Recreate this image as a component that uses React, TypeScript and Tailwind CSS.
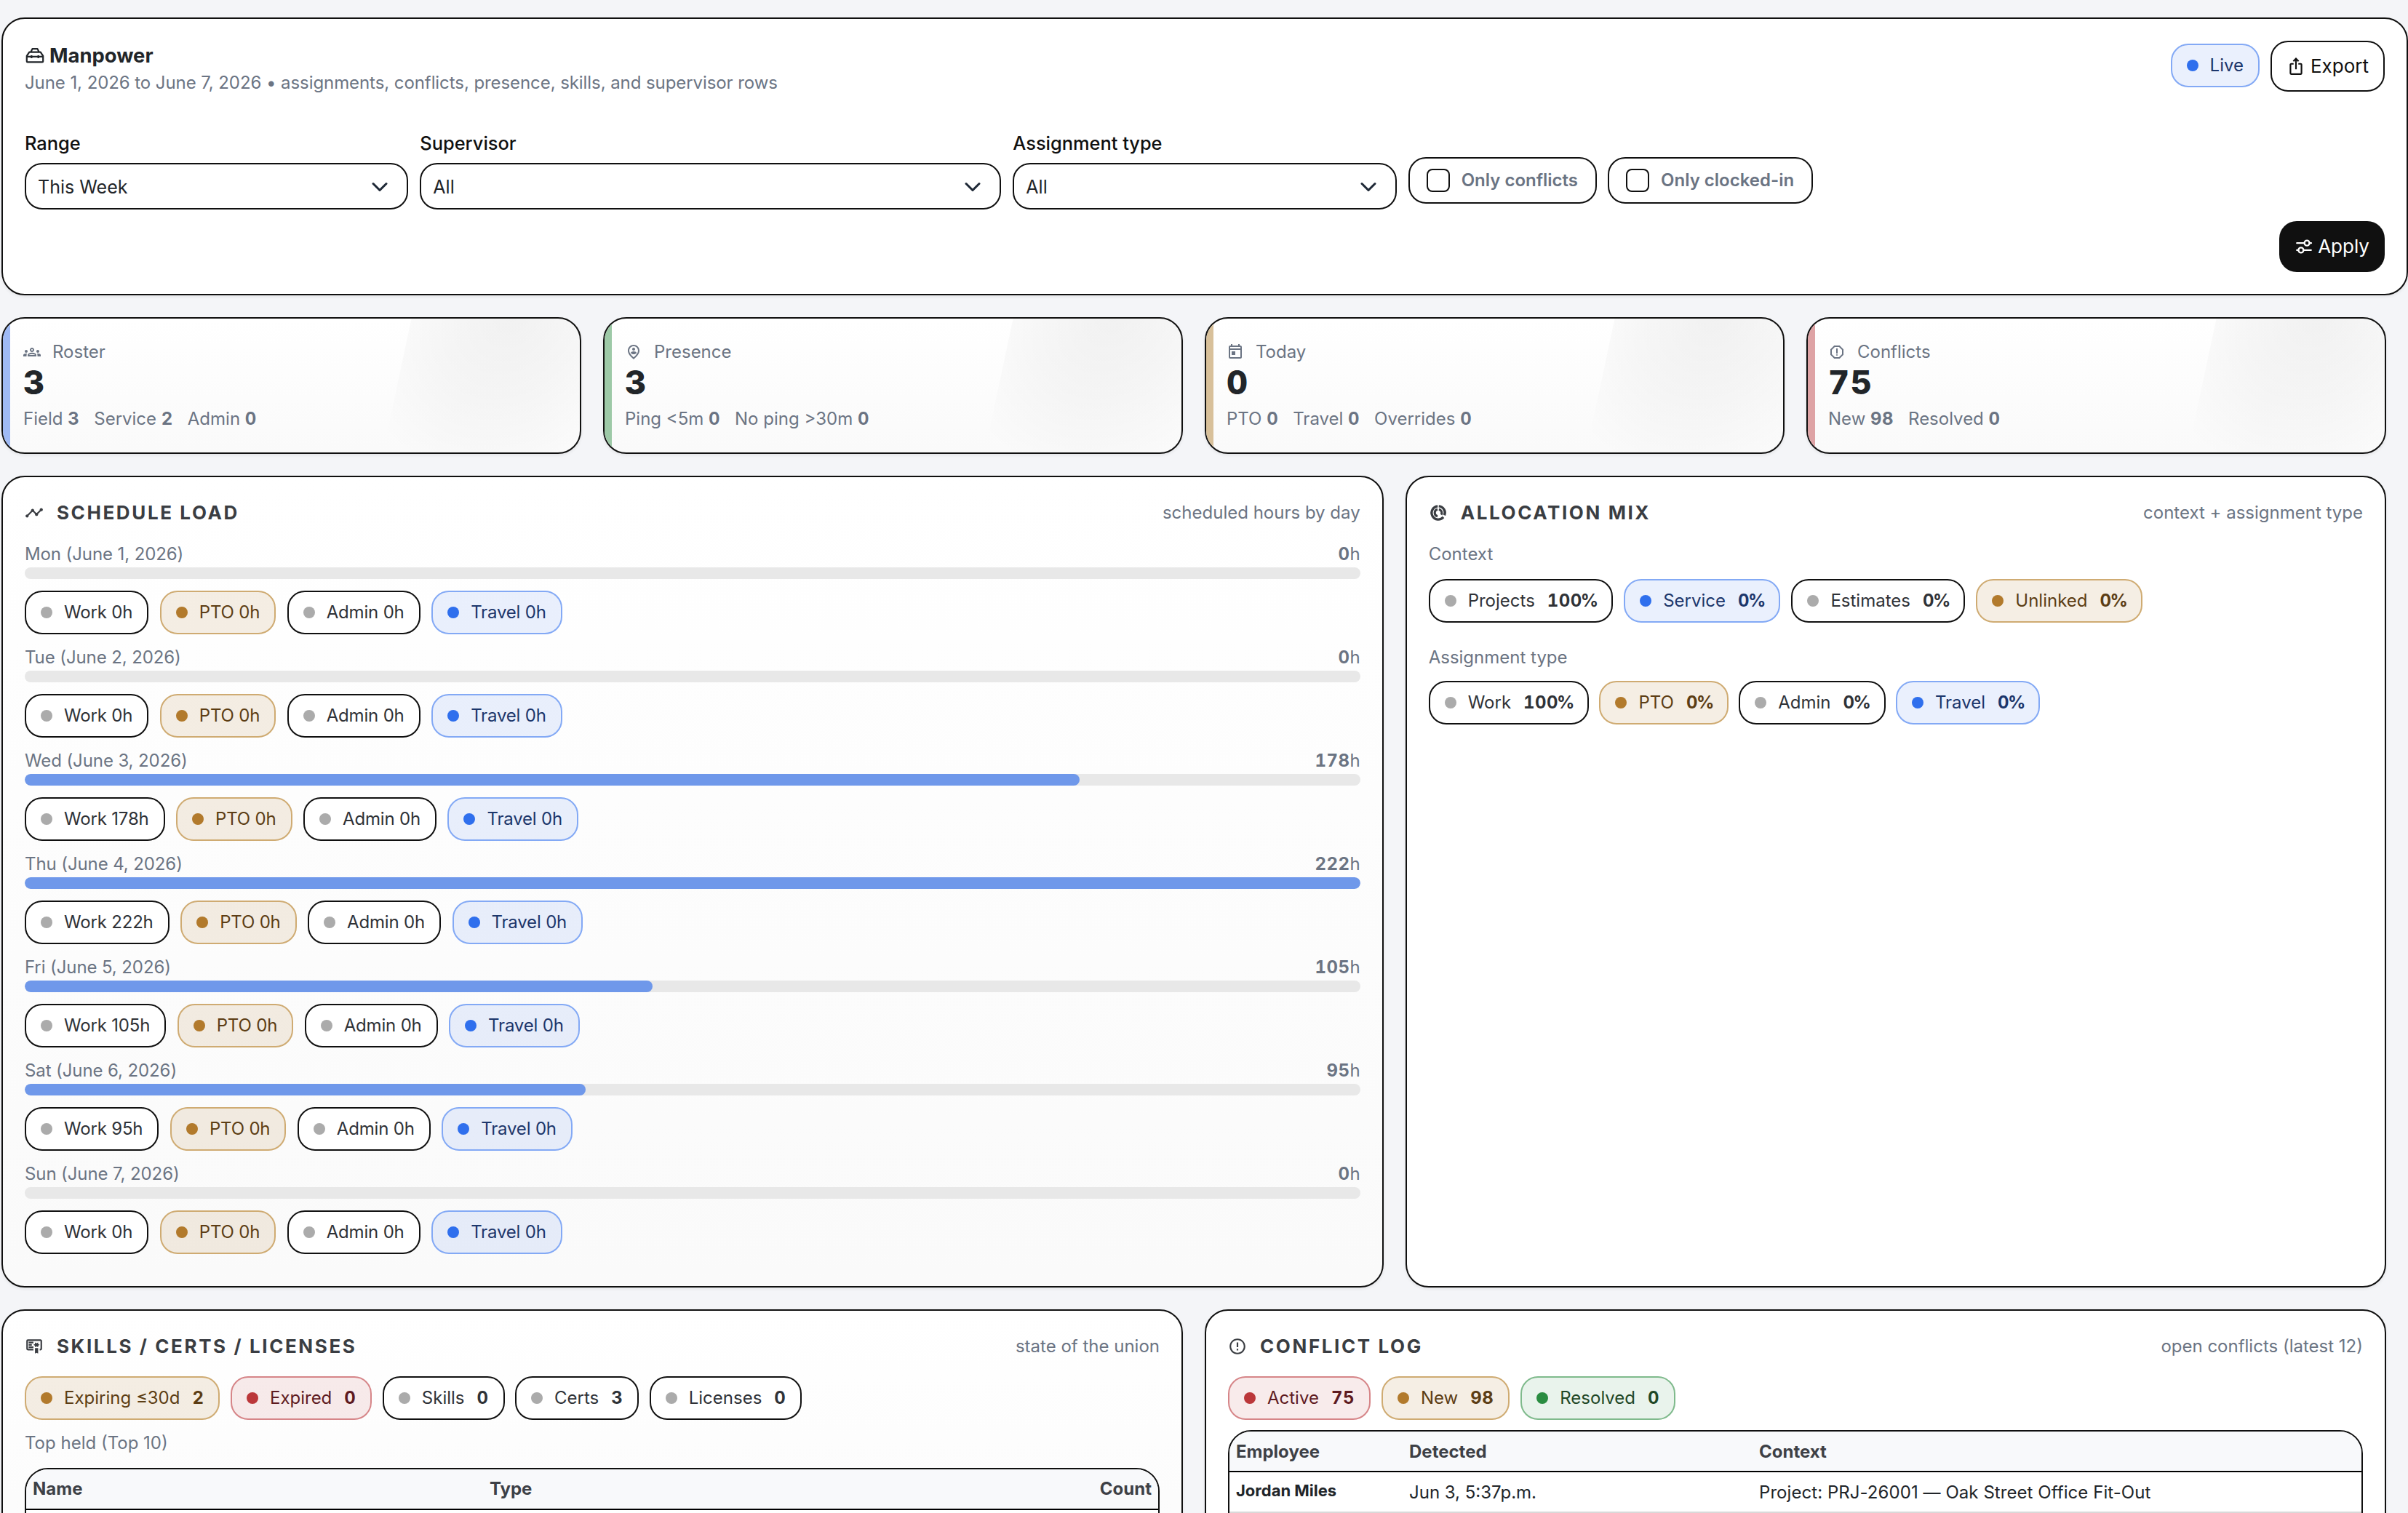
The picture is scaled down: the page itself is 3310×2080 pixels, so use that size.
import type { ReactNode } from "react";
import {
  MdErrorOutline,
  MdIosShare,
  MdOutlineGroups,
  MdOutlinePersonPinCircle,
  MdOutlineReport,
  MdOutlineToday,
  MdTimeline,
} from "react-icons/md";

type Tone = "plain" | "amber" | "blue" | "red" | "green";

const toneBox: Record<Tone, string> = {
  plain: "border-[#101010] bg-white text-[#2f3237]",
  amber: "border-[#cfab72] bg-[#b27a2c]/13 text-[#5c3d14]",
  blue: "border-[#83a9f5] bg-[#2f6fed]/10 text-[#1c366b]",
  red: "border-[#d68588] bg-[#bb373a]/10 text-[#5e1a1f]",
  green: "border-[#7fba8c] bg-[#2a8c41]/10 text-[#1f4726]",
};

const toneDot: Record<Tone, string> = {
  plain: "bg-[#ababab]",
  amber: "bg-[#b27a2c]",
  blue: "bg-[#2f6fed]",
  red: "bg-[#bb373a]",
  green: "bg-[#2a8c41]",
};

function Pill({ tone, label, value, percent }: { tone: Tone; label: string; value?: string; percent?: boolean }) {
  return (
    <span
      className={`flex h-[60px] shrink-0 items-center gap-4 rounded-[24px] border-2 px-5 whitespace-nowrap ${toneBox[tone]}`}
    >
      <span className={`size-4 rounded-full ${toneDot[tone]}`} />
      <span>{label}</span>
      {value !== undefined && (
        <b className="ml-px font-bold tracking-[0.02em] tabular-nums">
          {value}
          {percent && <span className="-ml-[2px] tracking-[-2px]">%</span>}
        </b>
      )}
    </span>
  );
}

function ToolboxIcon() {
  return (
    <svg viewBox="0 0 24 24" className="size-7" fill="none" stroke="currentColor" strokeWidth="1.9" strokeLinejoin="round">
      <path d="M7.2 8.2 9 4.4h6l1.8 3.8M5.4 8.2h13.2l3 4.6V19a1 1 0 0 1-1 1H3.4a1 1 0 0 1-1-1v-6.2zM2.4 13.6h19.2M8 12v3.4M16 12v3.4" />
    </svg>
  );
}

function SlidersIcon() {
  return (
    <svg viewBox="0 0 24 24" className="size-[26px]" fill="none" stroke="currentColor" strokeWidth="2.1" strokeLinecap="round">
      <path d="M3 7.5h9.5M19 7.5h2.2M3 16.5h2M11.5 16.5H21" />
      <circle cx="15.8" cy="7.5" r="3.2" />
      <circle cx="8.2" cy="16.5" r="3.2" />
    </svg>
  );
}

function DonutIcon() {
  return (
    <svg viewBox="0 0 24 24" className="size-[26px]" fill="none" stroke="currentColor">
      <path strokeWidth="3.1" d="M12.7 3.6a8.45 8.45 0 0 1 7.2 11.5M18.5 17.5A8.45 8.45 0 1 1 11.3 3.6" />
      <path strokeWidth="2.8" d="M12.8 7.6a4.5 4.5 0 0 1 3 6.8M11.1 16.4A4.5 4.5 0 0 1 11.1 7.6" />
    </svg>
  );
}

function CertificateIcon() {
  return (
    <svg viewBox="0 0 24 24" className="size-[26px]" fill="currentColor">
      <path d="M13 21l2-1 2 1v-7h-4m4-5V7l-2 1-2-1v2l-2 1 2 1v2l2-1 2 1v-2l2-1m1-7H4a2 2 0 0 0-2 2v10a2 2 0 0 0 2 2h7v-2H4V5h16v10h-1v2h1a2 2 0 0 0 2-2V5c0-1.11-.9-2-2-2m-9 5H5V6h6m-2 5H5V9h4m2 5H5v-2h6z" />
    </svg>
  );
}

function SelectField({ label, value, span }: { label: string; value: string; span: string }) {
  return (
    <div className={span}>
      <div className="mb-2 text-[25.4px] leading-[38px] font-medium text-[#101010]">{label}</div>
      <div className="flex h-16 items-center justify-between rounded-[24px] border-2 border-[#101010] bg-white pt-px pr-6 pl-4 text-[25px] leading-[36px] text-[#212529]">
        {value}
        <svg viewBox="0 0 16 16" className="mr-px size-6" fill="none" stroke="#1f2937" strokeWidth="2" strokeLinecap="round" strokeLinejoin="round">
          <path d="m2 5 6 6 6-6" />
        </svg>
      </div>
    </div>
  );
}

function CheckField({ label }: { label: string }) {
  return (
    <div className="mt-[38px] flex h-16 items-center gap-4 rounded-[24px] border-2 border-[#101010] bg-white pr-6 pl-[23px] font-semibold whitespace-nowrap text-[#6b7483]">
      <span className="size-8 rounded-[8px] border-2 border-[#101010] bg-white" />
      {label}
    </div>
  );
}

function StatCard({
  stripe,
  icon,
  label,
  value,
  parts,
}: {
  stripe: string;
  icon: ReactNode;
  label: string;
  value: string;
  parts: [string, string][];
}) {
  return (
    <div className="relative h-[188px] overflow-hidden rounded-[32px] border-2 border-[#101010] bg-linear-to-b from-white to-[#fafafa] px-7 pt-[28px] shadow-[0_2px_4px_rgba(0,0,0,0.07)]">
      <div className={`absolute inset-y-0 left-0 w-[10px] ${stripe}`} />
      <div className="absolute -top-1 -right-12 -bottom-1 w-[299px] -skew-x-12 bg-[radial-gradient(ellipse_210px_220px_at_46%_0%,rgba(0,0,0,0.055),rgba(0,0,0,0.03)_50%,transparent)]" />
      <div className="relative flex flex-col text-[#6b7483]">
        <div className="flex h-9 items-center gap-4">
          {icon}
          {label}
        </div>
        <div className="mt-[2px] h-11 text-[45px] leading-[44px] font-extrabold tracking-[0.04em] text-[#212529] tabular-nums">
          {value}
        </div>
        <div className="mt-[10px] flex h-9 items-center gap-5">
          {parts.map(([name, count]) => (
            <span key={name}>
              {name} <b className="font-bold tracking-[0.02em] tabular-nums">{count}</b>
            </span>
          ))}
        </div>
      </div>
    </div>
  );
}

function Panel({
  className,
  icon,
  title,
  note,
  children,
}: {
  className: string;
  icon: ReactNode;
  title: string;
  note: string;
  children: ReactNode;
}) {
  return (
    <section className={`rounded-[32px] border-2 border-[#101010] p-[30px] shadow-[0_2px_4px_rgba(0,0,0,0.07)] ${className}`}>
      <div className="flex h-[38px] items-center justify-between">
        <h2 className="flex items-center gap-[18px] text-[26px] font-bold tracking-[0.1em] text-[#3a3d42]">
          {icon}
          {title}
        </h2>
        <span className="text-[#6b7483]">{note}</span>
      </div>
      {children}
    </section>
  );
}

const days = [
  { day: "Mon (June 1, 2026)", hours: "0", width: 0 },
  { day: "Tue (June 2, 2026)", hours: "0", width: 0 },
  { day: "Wed (June 3, 2026)", hours: "178", width: 79 },
  { day: "Thu (June 4, 2026)", hours: "222", width: 100 },
  { day: "Fri (June 5, 2026)", hours: "105", width: 47 },
  { day: "Sat (June 6, 2026)", hours: "95", width: 42 },
  { day: "Sun (June 7, 2026)", hours: "0", width: 0 },
];

export default function App() {
  return (
    <div className="h-[2080px] w-[3310px] overflow-hidden bg-[#f4f5f8] pt-6 pl-[2px] font-['Inter',sans-serif] text-[24px] leading-[36px] text-[#212529]">
      <header className="h-[382px] rounded-[32px] border-2 border-[#101010] bg-white p-[30px] shadow-[0_2px_4px_rgba(0,0,0,0.07)]">
        <div className="flex h-[70px] items-start justify-between">
          <div className="pt-[2px]">
            <h1 className="flex h-9 items-center gap-[6px] text-[27.4px] font-bold">
              <ToolboxIcon />
              Manpower
            </h1>
            <p className="mt-[2px] tracking-[-0.075px] text-[#6b7483]">
              June 1, 2026 to June 7, 2026 • assignments, conflicts, presence, skills, and supervisor rows
            </p>
          </div>
          <div className="flex items-start gap-[15px]">
            <div className="mt-1">
              <Pill tone="blue" label="Live" />
            </div>
            <button className="flex h-[70px] items-center gap-[7px] rounded-[24px] border-2 border-[#101010] bg-white px-5 text-[26px] text-[#101010]">
              <MdIosShare size={26} />
              Export
            </button>
          </div>
        </div>
        <div className="mt-[52px] grid grid-cols-12 gap-4">
          <SelectField span="col-span-2" label="Range" value="This Week" />
          <SelectField span="col-span-3" label="Supervisor" value="All" />
          <SelectField span="col-span-2" label="Assignment type" value="All" />
          <div className="col-span-5 flex items-start gap-[15px]">
            <CheckField label="Only conflicts" />
            <CheckField label="Only clocked-in" />
          </div>
        </div>
        <div className="mt-4 flex justify-end">
          <button className="flex h-[70px] items-center gap-[6px] rounded-[24px] bg-[#101010] px-[21px] text-[26px] text-white">
            <SlidersIcon />
            Apply
          </button>
        </div>
      </header>

      <main className="mt-[30px] flex w-[3278px] flex-col gap-[30px]">
        <div className="grid grid-cols-4 gap-[30px]">
          <StatCard
            stripe="bg-[#9fbaf5]"
            icon={<MdOutlineGroups size={24} />}
            label="Roster"
            value="3"
            parts={[["Field", "3"], ["Service", "2"], ["Admin", "0"]]}
          />
          <StatCard
            stripe="bg-[#9dc9a7]"
            icon={<MdOutlinePersonPinCircle size={24} />}
            label="Presence"
            value="3"
            parts={[["Ping <5m", "0"], ["No ping >30m", "0"]]}
          />
          <StatCard
            stripe="bg-[#d8c09a]"
            icon={<MdOutlineToday size={24} />}
            label="Today"
            value="0"
            parts={[["PTO", "0"], ["Travel", "0"], ["Overrides", "0"]]}
          />
          <StatCard
            stripe="bg-[#dea3a5]"
            icon={<MdOutlineReport size={24} />}
            label="Conflicts"
            value="75"
            parts={[["New", "98"], ["Resolved", "0"]]}
          />
        </div>

        <div className="grid h-[1116px] grid-cols-12 gap-[30px]">
          <Panel
            className="col-span-7 bg-linear-to-b from-white to-[#fafafa]"
            icon={<MdTimeline size={26} />}
            title="SCHEDULE LOAD"
            note="scheduled hours by day"
          >
            <div className="mt-5">
              {days.map((d) => (
                <div key={d.day} className="h-[142px]">
                  <div className="flex h-9 justify-between text-[#6b7483]">
                    <span className="tracking-[-0.1px]">{d.day}</span>
                    <span>
                      <b className="font-bold tracking-[0.02em] tabular-nums">{d.hours}</b>h
                    </span>
                  </div>
                  <div className="h-4 overflow-hidden rounded-[8px] bg-[#e8e8e8]">
                    <div className="h-full rounded-[8px] bg-[#6f98ea]" style={{ width: `${d.width}%` }} />
                  </div>
                  <div className="mt-4 flex gap-[15.5px] tracking-[-0.18px]">
                    <Pill tone="plain" label={`Work ${d.hours}h`} />
                    <Pill tone="amber" label="PTO 0h" />
                    <Pill tone="plain" label="Admin 0h" />
                    <Pill tone="blue" label="Travel 0h" />
                  </div>
                </div>
              ))}
            </div>
          </Panel>

          <Panel className="col-span-5 bg-white" icon={<DonutIcon />} title="ALLOCATION MIX" note="context + assignment type">
            <div className="mt-5 text-[#6b7483]">Context</div>
            <div className="mt-4 flex gap-[15px]">
              <Pill tone="plain" label="Projects" value="100" percent />
              <Pill tone="blue" label="Service" value="0" percent />
              <Pill tone="plain" label="Estimates" value="0" percent />
              <Pill tone="amber" label="Unlinked" value="0" percent />
            </div>
            <div className="mt-[30px] text-[#6b7483]">Assignment type</div>
            <div className="mt-[14px] flex gap-[14px]">
              <Pill tone="plain" label="Work" value="100" percent />
              <Pill tone="amber" label="PTO" value="0" percent />
              <Pill tone="plain" label="Admin" value="0" percent />
              <Pill tone="blue" label="Travel" value="0" percent />
            </div>
          </Panel>
        </div>

        <div className="grid h-[420px] grid-cols-2 gap-[30px]">
          <Panel
            className="bg-linear-to-b from-white to-[#fafafa]"
            icon={<CertificateIcon />}
            title="SKILLS / CERTS / LICENSES"
            note="state of the union"
          >
            <div className="mt-[22px] flex gap-[14.5px]">
              <Pill tone="amber" label="Expiring ≤30d" value="2" />
              <Pill tone="red" label="Expired" value="0" />
              <Pill tone="plain" label="Skills" value="0" />
              <Pill tone="plain" label="Certs" value="3" />
              <Pill tone="plain" label="Licenses" value="0" />
            </div>
            <div className="mt-[14px] text-[#6b7483]">Top held (Top 10)</div>
            <div className="mt-4 h-[180px] overflow-hidden rounded-[32px] border-2 border-[#101010] bg-white">
              <div className="flex h-14 items-center border-b-2 border-black bg-[#f8f9fb] px-[9px] font-bold text-[#3d4046]">
                <span className="w-[628px]">Name</span>
                <span className="flex-1">Type</span>
                <span>Count</span>
              </div>
            </div>
          </Panel>

          <Panel className="bg-white" icon={<MdErrorOutline size={26} />} title="CONFLICT LOG" note="open conflicts (latest 12)">
            <div className="mt-[22px] flex gap-[15px]">
              <Pill tone="red" label="Active" value="75" />
              <Pill tone="amber" label="New" value="98" />
              <Pill tone="green" label="Resolved" value="0" />
            </div>
            <div className="mt-[14px] h-[240px] overflow-hidden rounded-[32px] border-2 border-[#101010] bg-white">
              <div className="flex h-14 items-center border-b-2 border-black bg-[#f8f9fb] px-[9px] pt-px font-bold text-[#3d4046]">
                <span className="w-[238px]">Employee</span>
                <span className="w-[481px]">Detected</span>
                <span>Context</span>
              </div>
              <div className="flex h-14 items-center border-b-2 border-[#d9d9d9] px-[9px] pt-[2px]">
                <span className="-mt-[6px] w-[238px] text-[22px] font-bold">Jordan Miles</span>
                <span className="w-[481px]">Jun 3, 5:37p.m.</span>
                <span className="tracking-[0.06px]">Project: PRJ-26001 — Oak Street Office Fit-Out</span>
              </div>
            </div>
          </Panel>
        </div>
      </main>
    </div>
  );
}
